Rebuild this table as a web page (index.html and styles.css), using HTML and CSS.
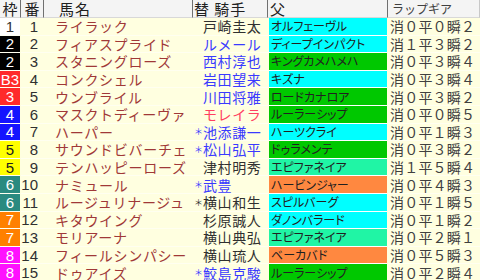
FILE: index.html
```html
<!DOCTYPE html>
<html lang="ja">
<head>
<meta charset="utf-8">
<link rel="stylesheet" href="styles.css">
</head>
<body>
<div class="sheet">
  <div class="hd c-waku">枠</div>
  <div class="hd c-ban">番</div>
  <div class="hd c-name">馬名</div>
  <div class="hd c-jk">替&nbsp;騎手</div>
  <div class="hd c-sire">父</div>
  <div class="hd c-lap">ラップギア</div>

  <div class="waku w1">1</div><div class="ban">1</div><div class="name">ライラック</div><div class="jk"><span class="st"></span>戸崎圭太</div><div class="sire s-cy">オルフェーヴル</div><div class="lap">消０平０瞬２</div>
  <div class="waku w2">2</div><div class="ban">2</div><div class="name">フィアスプライド</div><div class="jk bl"><span class="st"></span>ルメール</div><div class="sire s-cy">ディープインパクト</div><div class="lap">消１平３瞬２</div>
  <div class="waku w2">2</div><div class="ban">3</div><div class="name">スタニングローズ</div><div class="jk bl"><span class="st"></span>西村淳也</div><div class="sire s-gr">キングカメハメハ</div><div class="lap">消０平３瞬４</div>
  <div class="waku w3">B3</div><div class="ban">4</div><div class="name">コンクシェル</div><div class="jk bl"><span class="st"></span>岩田望来</div><div class="sire s-cy">キズナ</div><div class="lap">消０平３瞬４</div>
  <div class="waku w3">3</div><div class="ban">5</div><div class="name">ウンブライル</div><div class="jk bl"><span class="st"></span>川田将雅</div><div class="sire s-gr">ロードカナロア</div><div class="lap">消０平３瞬２</div>
  <div class="waku w4">4</div><div class="ban">6</div><div class="name">マスクトディーヴァ</div><div class="jk rd"><span class="st"></span>モレイラ</div><div class="sire s-gr">ルーラーシップ</div><div class="lap">消０平０瞬５</div>
  <div class="waku w4">4</div><div class="ban">7</div><div class="name">ハーパー</div><div class="jk bl"><span class="st">＊</span>池添謙一</div><div class="sire s-cy">ハーツクライ</div><div class="lap">消０平１瞬３</div>
  <div class="waku w5">5</div><div class="ban">8</div><div class="name">サウンドビバーチェ</div><div class="jk bl"><span class="st">＊</span>松山弘平</div><div class="sire s-gr">ドゥラメンテ</div><div class="lap">消０平３瞬２</div>
  <div class="waku w5">5</div><div class="ban">9</div><div class="name">テンハッピーローズ</div><div class="jk"><span class="st"></span>津村明秀</div><div class="sire s-sg">エピファネイア</div><div class="lap">消１平５瞬４</div>
  <div class="waku w6">6</div><div class="ban">10</div><div class="name">ナミュール</div><div class="jk bl"><span class="st">＊</span>武豊</div><div class="sire s-or">ハービンジャー</div><div class="lap">消０平４瞬３</div>
  <div class="waku w6">6</div><div class="ban">11</div><div class="name">ルージュリナージュ</div><div class="jk"><span class="st">＊</span>横山和生</div><div class="sire s-cy">スピルバーグ</div><div class="lap">消０平１瞬５</div>
  <div class="waku w7">7</div><div class="ban">12</div><div class="name">キタウイング</div><div class="jk"><span class="st"></span>杉原誠人</div><div class="sire s-cy">ダノンバラード</div><div class="lap">消０平１瞬２</div>
  <div class="waku w7">7</div><div class="ban">13</div><div class="name">モリアーナ</div><div class="jk"><span class="st"></span>横山典弘</div><div class="sire s-sg">エピファネイア</div><div class="lap">消０平２瞬１</div>
  <div class="waku w8">8</div><div class="ban">14</div><div class="name">フィールシンパシー</div><div class="jk"><span class="st"></span>横山琉人</div><div class="sire s-or">ベーカバド</div><div class="lap">消０平５瞬３</div>
  <div class="waku w8">8</div><div class="ban">15</div><div class="name">ドゥアイズ</div><div class="jk bl"><span class="st">＊</span>鮫島克駿</div><div class="sire s-gr">ルーラーシップ</div><div class="lap">消０平２瞬４</div>
</div>
</body>
</html>
```
FILE: styles.css
```css
html, body {
  margin: 0;
  padding: 0;
  background: #ffffe0;
  overflow: hidden;
}
.sheet {
  width: 480px;
  display: grid;
  grid-template-columns: 21px 23px 149px 75px 120px 92px;
  grid-template-rows: 18px;
  grid-auto-rows: 17.6px;
  font-family: "Noto Sans CJK JP", "Noto Sans", sans-serif;
  line-height: 1;
  background: #ffffe0;
}
.sheet > div {
  box-sizing: border-box;
  display: flex;
  align-items: center;
  overflow: hidden;
  white-space: nowrap;
  border-bottom: 1px solid #fffff0;
}
.hd {
  background: #f4f4f4;
  border-bottom: 1px solid #d8d8d8 !important;
  border-right: 1px solid #707070;
  font-size: 15px;
  color: #202020;
}
.c-waku { justify-content: center; }
.c-ban { justify-content: center; }
.c-name { padding-left: 15px; letter-spacing: 1px; }
.c-jk { padding-left: 1px; letter-spacing: 1px; }
.c-sire { padding-left: 2px; }
.c-lap { padding-left: 4px; font-size: 12px; color: #404040; border-right: 1px solid #c8c8c8; }

.waku {
  justify-content: center;
  font-family: "Liberation Sans", Arial, sans-serif;
  font-size: 15px;
  color: #fff;
  margin-right: 1px;
}
.w1 { background: #ffffff; color: #303030; }
.w2 { background: #000000; }
.w3 { background: #ff2a2a; }
.w4 { background: #1414ff; }
.w5 { background: #ffff00; color: #202020; }
.w6 { background: #2a8a80; }
.w7 { background: #ff8000; }
.w8 { background: #ff10ff; }

.ban {
  justify-content: flex-end;
  padding-right: 6px;
  font-family: "Liberation Sans", Arial, sans-serif;
  font-size: 15px;
  color: #303030;
}
.name {
  padding-left: 11px;
  font-size: 14px;
  letter-spacing: 0.7px;
  color: #a03838;
}
.jk {
  padding-left: 1px;
  font-size: 14px;
  letter-spacing: 0.6px;
  color: #303030;
}
.st {
  width: 9px;
  flex: none;
  font-size: 9px;
  letter-spacing: 0;
}
.jk.bl { color: #3a3aff; }
.jk.rd { color: #ff4060; }
.sire {
  margin: 0 1px;
  padding-left: 2px;
  font-size: 12px;
  font-feature-settings: "palt";
  color: #202020;
  border-bottom: 1px solid #ffffff !important;
}
.s-cy { background: #00ffff; }
.s-gr { background: #00c800; }
.s-sg { background: #20f5a5; }
.s-or { background: #ff8840; }
.lap {
  padding-left: 2px;
  font-size: 14px;
  letter-spacing: 0.2px;
  color: #404040;
}
```
